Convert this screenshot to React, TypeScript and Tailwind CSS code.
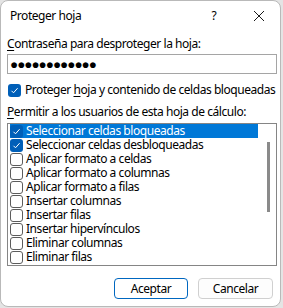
import React from 'react';

const items = [
  { label: 'Seleccionar celdas bloqueadas', checked: true, selected: true },
  { label: 'Seleccionar celdas desbloqueadas', checked: true },
  { label: 'Aplicar formato a celdas' },
  { label: 'Aplicar formato a columnas' },
  { label: 'Aplicar formato a filas' },
  { label: 'Insertar columnas' },
  { label: 'Insertar filas' },
  { label: 'Insertar hipervínculos' },
  { label: 'Eliminar columnas' },
  { label: 'Eliminar filas' },
];

/* Casilla estilo Windows 11 */
const Check = ({ checked }: { checked?: boolean }) =>
  checked ? (
    <span className="w-[13px] h-[13px] rounded-[3px] bg-[#005fb8] flex items-center justify-center shrink-0">
      <svg width="9" height="9" viewBox="0 0 9 9">
        <path d="M1.5 4.8 L3.5 6.8 L7.6 2.2" fill="none" stroke="white" strokeWidth="1" />
      </svg>
    </span>
  ) : (
    <span className="w-[13px] h-[13px] rounded-[3px] border border-[#5c5c5c] bg-white shrink-0" />
  );

export default function App() {
  return (
    <div
      className="w-[283px] h-[308px] bg-[#e4e4e4] text-[12px] leading-[16px] tracking-[-0.45px] text-black whitespace-nowrap"
      style={{ fontFamily: '"Noto Sans", "Open Sans", sans-serif' }}
    >
      <div className="w-[281px] h-[307px] bg-white border border-[#b9b9b9] rounded-lg">
        {/* TITULO */}
        <div className="h-[29px] flex items-center">
          <span className="pl-[9px] flex-1 pt-[1px]">Proteger hoja</span>
          <span className="w-[10px] text-center mr-[34px] pt-[1px]">?</span>
          <svg width="12" height="12" viewBox="0 0 12 12" className="mr-[15px]">
            <path d="M1 1 L11 11 M11 1 L1 11" stroke="#1a1a1a" strokeWidth="1" />
          </svg>
        </div>

        <div className="px-[6px]">
          <div className="mt-[6px]">
            <span className="underline underline-offset-2">C</span>ontraseña para desproteger la hoja:
          </div>
          <div className="mt-[2px] h-[20px] w-[270px] border border-[#a5a5a5] flex items-center pl-[2px] text-[13.5px] tracking-[-1px]">
            ●●●●●●●●●●●●
          </div>

          <div className="mt-[8px] h-[16px] flex items-center">
            <span className="ml-[1px]">
              <Check checked />
            </span>
            <span className="ml-[4px]">
              Proteger <span className="underline underline-offset-2">h</span>oja y contenido de celdas bloqueadas
            </span>
          </div>

          <div className="mt-[6px]">
            <span className="underline underline-offset-2">P</span>ermitir a los usuarios de esta hoja de cálculo:
          </div>

          {/* LISTA */}
          <div className="mt-[3px] h-[143px] w-[270px] border border-[#858585] flex">
            <div className="flex-1 pl-[2px]">
              {items.map(it => (
                <div
                  key={it.label}
                  className={
                    it.selected
                      ? 'h-[14px] leading-[14px] w-[248px] bg-[#0078d7] text-white flex items-center'
                      : 'h-[14px] leading-[14px] w-[248px] flex items-center'
                  }
                >
                  <Check checked={it.checked} />
                  <span className="ml-[3px]">{it.label}</span>
                </div>
              ))}
            </div>
            <div className="w-[10px] pt-[18px]">
              <div className="w-[3px] h-[70px] bg-[#8a8a8a] ml-[1px]" />
            </div>
          </div>

          {/* BOTONES */}
          <div className="mt-[12px] flex justify-end gap-[10px] pr-[1px]">
            <button className="w-[74px] h-[21px] rounded-[4px] border border-[#0067c0] bg-white">
              Aceptar
            </button>
            <button className="w-[75px] h-[21px] rounded-[4px] border border-[#d0d0d0] bg-[#fdfdfd]">
              Cancelar
            </button>
          </div>
        </div>
      </div>
    </div>
  );
}
